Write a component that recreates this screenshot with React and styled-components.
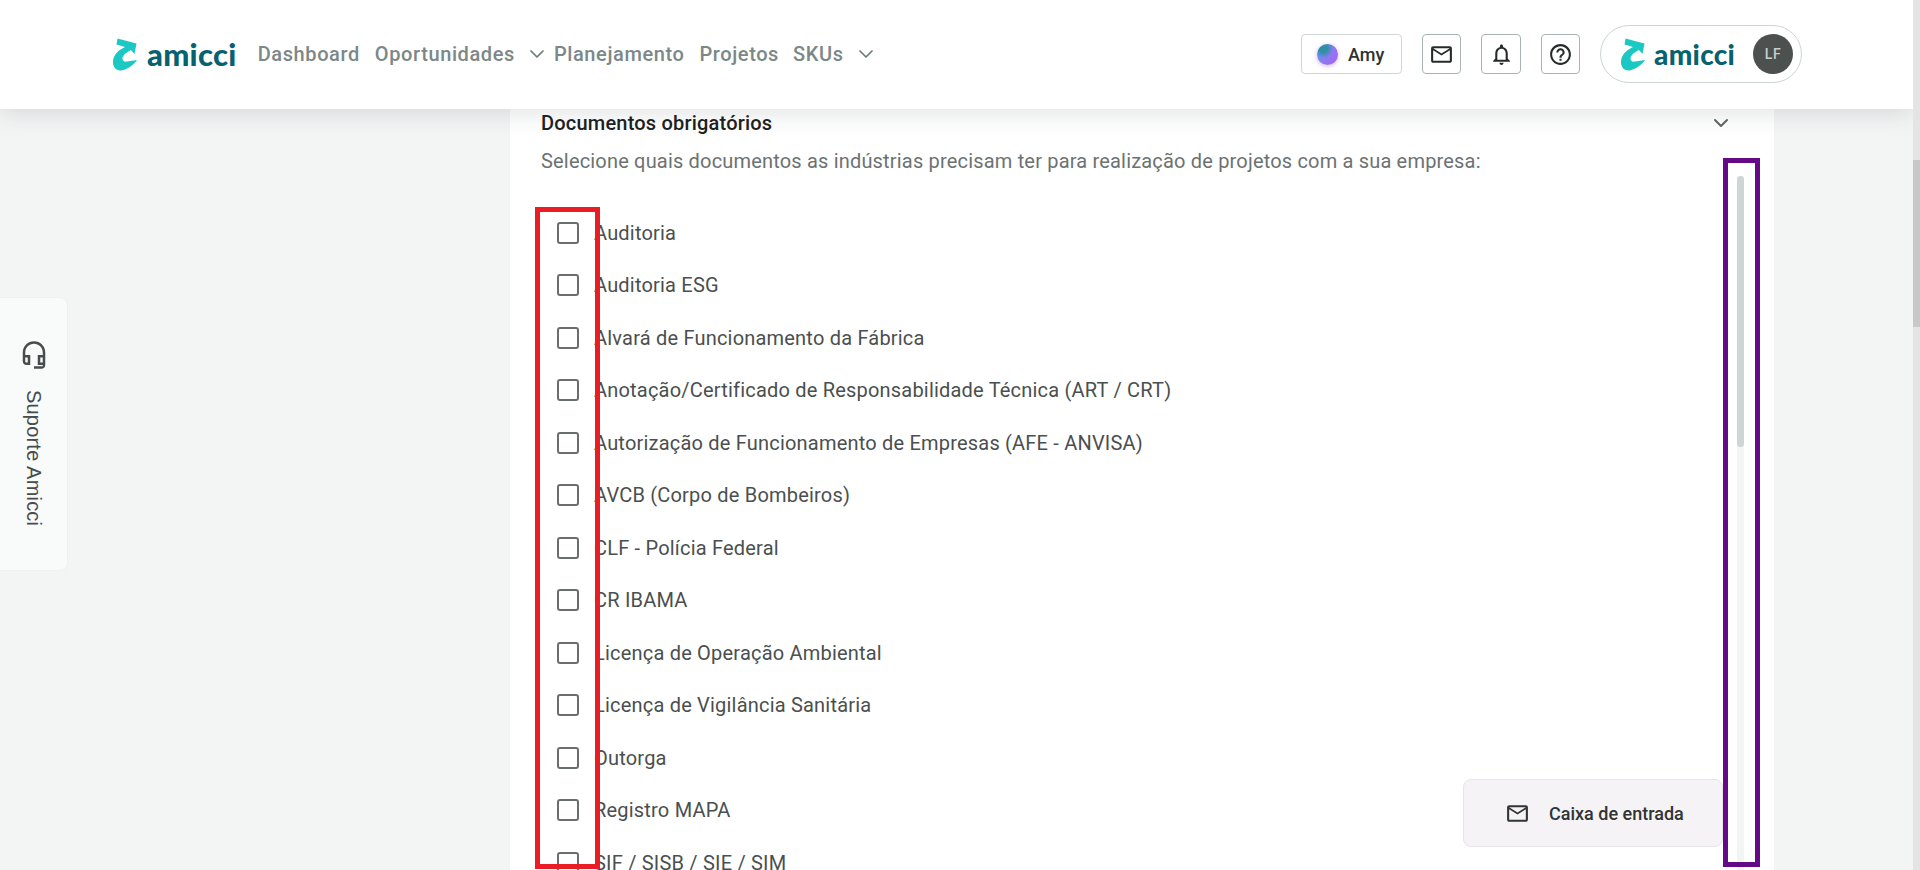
import React from "react";
import styled, { createGlobalStyle } from "styled-components";
import { ChevronDown } from "lucide-react";
import {
  MdMailOutline,
  MdNotificationsNone,
  MdHelpOutline,
  MdOutlineHeadsetMic,
} from "react-icons/md";

const documents = [
  "Auditoria",
  "Auditoria ESG",
  "Alvará de Funcionamento da Fábrica",
  "Anotação/Certificado de Responsabilidade Técnica (ART / CRT)",
  "Autorização de Funcionamento de Empresas (AFE - ANVISA)",
  "AVCB (Corpo de Bombeiros)",
  "CLF - Polícia Federal",
  "CR IBAMA",
  "Licença de Operação Ambiental",
  "Licença de Vigilância Sanitária",
  "Outorga",
  "Registro MAPA",
  "SIF / SISB / SIE / SIM",
];

const GlobalStyle = createGlobalStyle`
  html, body {
    margin: 0;
    height: 100%;
    overflow: hidden;
  }
  body {
    font-family: Roboto, "Liberation Sans", sans-serif;
    background: #f3f5f5;
  }
  * {
    box-sizing: border-box;
  }
`;

const Root = styled.div`
  display: grid;
  grid-template-columns: 1fr 7px;
  height: 870px;
  overflow: hidden;
`;

const PageScrollbar = styled.div`
  background: #e4e4e4;
  padding-top: 160px;
`;

const PageThumb = styled.div`
  height: 167px;
  background: #c8c8c8;
`;

const Page = styled.div`
  position: relative;
  height: 870px;
  overflow: hidden;
`;

const Header = styled.header`
  position: relative;
  z-index: 3;
  display: flex;
  align-items: center;
  justify-content: space-between;
  height: 109px;
  padding: 0 111px 1px 113px;
  background: #fff;
  box-shadow: 0 3px 24px rgba(40, 50, 50, 0.15);
`;

const HeaderLeft = styled.div`
  display: flex;
  align-items: center;
`;

const HeaderRight = styled.div`
  display: flex;
  align-items: center;
  gap: 20px;
`;

const Nav = styled.nav`
  display: flex;
  align-items: center;
  margin-left: 21px;
`;

const NavItem = styled.a`
  display: flex;
  align-items: center;
  margin-right: ${(p) => p.$gap}px;
  font-size: 20px;
  font-weight: 500;
  line-height: 24px;
  letter-spacing: 0.6px;
  color: #7c8787;
`;

const NavChevron = styled(ChevronDown)`
  width: 24px;
  height: 24px;
  margin-left: 10px;
  color: #6f7a7a;
`;

const LogoWrap = styled.div`
  display: flex;
  align-items: center;
`;

const LogoWord = styled.span`
  margin-left: ${(p) => p.$gap}px;
  font-family: Lato, "Noto Sans", sans-serif;
  font-size: ${(p) => p.$size}px;
  font-weight: 900;
  line-height: 32px;
  letter-spacing: 0.3px;
  color: #07616f;
`;

const AmyButton = styled.button`
  display: flex;
  align-items: center;
  gap: 10px;
  width: 101px;
  height: 40px;
  padding: 0 0 0 15px;
  border: 1px solid #cfd6d6;
  border-radius: 4px;
  background: #fff;
  font-family: inherit;
  font-size: 18px;
  font-weight: 500;
  color: #2d3232;
`;

const Orb = styled.span`
  display: block;
  flex: none;
  width: 21px;
  height: 21px;
  border-radius: 50%;
  background: radial-gradient(circle at 30% 20%, #2f8fa8 0 18%, transparent 45%),
    linear-gradient(120deg, #5f9ff2 0%, #8a7cf2 50%, #ad5ff3 100%);
  box-shadow: 0 1px 4px rgba(160, 100, 240, 0.5);
`;

const IconButton = styled.button`
  display: flex;
  align-items: center;
  justify-content: center;
  width: ${(p) => p.$width}px;
  height: 40px;
  padding: 0;
  border: 1px solid #aab3b3;
  border-radius: 4px;
  background: #fff;
  color: #262a2a;

  svg {
    width: 25px;
    height: 25px;
  }
`;

const AccountPill = styled.div`
  display: flex;
  align-items: center;
  justify-content: space-between;
  width: 202px;
  height: 58px;
  padding: 0 8px 0 20px;
  border: 1px solid #ccd4d4;
  border-radius: 29px;
  background: #fff;
`;

const Avatar = styled.span`
  display: flex;
  align-items: center;
  justify-content: center;
  width: 40px;
  height: 40px;
  border-radius: 50%;
  background: #4c5150;
  font-size: 14px;
  font-weight: 500;
  letter-spacing: 0.5px;
  color: #c9cecd;
`;

const Body = styled.main`
  display: flex;
  padding-left: 510px;
  padding-right: 139px;
`;

const Panel = styled.section`
  position: relative;
  flex: 1;
  height: 761px;
  overflow: hidden;
  padding-left: 31px;
  background: #fff;
`;

const TitleRow = styled.div`
  display: flex;
  align-items: center;
  justify-content: space-between;
  height: 28px;
  padding-right: 41px;
`;

const Title = styled.h2`
  margin: 0;
  font-size: 20px;
  font-weight: 500;
  line-height: 28px;
  letter-spacing: 0.2px;
  color: #1d2222;
`;

const TitleChevron = styled(ChevronDown)`
  width: 24px;
  height: 24px;
  color: #5f6666;
`;

const Description = styled.p`
  margin: 10px 0 0;
  font-size: 20px;
  line-height: 28px;
  letter-spacing: 0.18px;
  color: #6c7272;
`;

const DocumentList = styled.ul`
  display: flex;
  flex-direction: column;
  margin: 31.5px 0 0;
  padding: 0 0 0 16px;
  list-style: none;
`;

const DocumentRow = styled.li`
  display: flex;
  align-items: center;
  gap: 15px;
  height: 52.5px;
  font-size: 20px;
  letter-spacing: 0.2px;
  color: #4a4f4f;
`;

const CheckBox = styled.span`
  flex: none;
  width: 22px;
  height: 22px;
  border: 2.5px solid #6a6e6e;
  border-radius: 3px;
  background: #fff;
`;

const InnerScrollbar = styled.div`
  position: absolute;
  top: 67px;
  right: 30px;
  bottom: 0;
  width: 7px;
  background: #f3f5f5;
`;

const InnerThumb = styled.div`
  height: 271px;
  border-radius: 4px;
  background: #cdd5d5;
`;

const RedMark = styled.div`
  position: absolute;
  z-index: 1;
  top: 98px;
  left: 25px;
  width: 65px;
  height: 662px;
  border: 5px solid #ea1c24;
`;

const PurpleMark = styled.div`
  position: absolute;
  z-index: 1;
  top: 49px;
  right: 14px;
  width: 37.5px;
  height: 709px;
  border: 5px solid #650a86;
`;

const InboxButton = styled.button`
  position: absolute;
  z-index: 2;
  top: 670px;
  right: 51px;
  display: flex;
  align-items: center;
  gap: 19px;
  width: 260px;
  height: 68px;
  padding: 0 0 0 41px;
  border: 1px solid #e8e4ea;
  border-radius: 8px;
  background: #f6f3f6;
  font-family: inherit;
  font-size: 18px;
  font-weight: 500;
  color: #303434;

  svg {
    width: 25px;
    height: 25px;
  }
`;

const SupportTab = styled.aside`
  position: absolute;
  z-index: 2;
  top: 297px;
  left: 0;
  display: flex;
  flex-direction: column;
  align-items: center;
  gap: 20px;
  width: 68px;
  height: 274px;
  padding-top: 42px;
  border: 1px solid #eef0f0;
  border-left: none;
  border-radius: 0 8px 8px 0;
  background: #f9fafa;
  color: #474c4c;

  svg {
    width: 30px;
    height: 30px;
  }
`;

const SupportLabel = styled.span`
  writing-mode: vertical-rl;
  font-family: "Liberation Sans", Arial, sans-serif;
  font-size: 20px;
  line-height: 24px;
  letter-spacing: 0.2px;
`;

function Logo({ wordSize, wordGap }) {
  return (
    <LogoWrap>
      <svg width="24" height="33" viewBox="0 0 24 32" aria-hidden="true">
        <path
          fill="#1cc8c4"
          d="M4.5 0 L23.5 5 L21.5 15.5 L18 11.5 C13 14 9.5 17 9.5 20 C9.5 22.5 11.5 23.5 14 23 L24 21.5 C21 26 15 31 8 32 C3 32.5 0 28.5 0 23.5 C0 16 6 11.5 12 8.5 L3.5 6 Z"
        />
      </svg>
      <LogoWord $size={wordSize} $gap={wordGap}>amicci</LogoWord>
    </LogoWrap>
  );
}

export default function App() {
  return (
    <>
      <GlobalStyle />
      <Root>
        <Page>
          <Header>
            <HeaderLeft>
              <Logo wordSize={31} wordGap={10} />
              <Nav>
                <NavItem $gap={15}>Dashboard</NavItem>
                <NavItem $gap={5}>
                  Oportunidades
                  <NavChevron strokeWidth={1.75} />
                </NavItem>
                <NavItem $gap={15}>Planejamento</NavItem>
                <NavItem $gap={14}>Projetos</NavItem>
                <NavItem $gap={0}>
                  SKUs
                  <NavChevron strokeWidth={1.75} />
                </NavItem>
              </Nav>
            </HeaderLeft>
            <HeaderRight>
              <AmyButton>
                <Orb />
                Amy
              </AmyButton>
              <IconButton $width={39} aria-label="Mensagens">
                <MdMailOutline />
              </IconButton>
              <IconButton $width={40} aria-label="Notificações">
                <MdNotificationsNone />
              </IconButton>
              <IconButton $width={39} aria-label="Ajuda">
                <MdHelpOutline />
              </IconButton>
              <AccountPill>
                <Logo wordSize={28} wordGap={9} />
                <Avatar>LF</Avatar>
              </AccountPill>
            </HeaderRight>
          </Header>
          <Body>
            <Panel>
              <TitleRow>
                <Title>Documentos obrigatórios</Title>
                <TitleChevron />
              </TitleRow>
              <Description>
                Selecione quais documentos as indústrias precisam ter para realização de projetos com a sua empresa:
              </Description>
              <DocumentList>
                {documents.map((doc) => (
                  <DocumentRow key={doc}>
                    <CheckBox />
                    {doc}
                  </DocumentRow>
                ))}
              </DocumentList>
              <RedMark />
              <InnerScrollbar>
                <InnerThumb />
              </InnerScrollbar>
              <PurpleMark />
              <InboxButton>
                <MdMailOutline />
                Caixa de entrada
              </InboxButton>
            </Panel>
          </Body>
          <SupportTab>
            <MdOutlineHeadsetMic />
            <SupportLabel>Suporte Amicci</SupportLabel>
          </SupportTab>
        </Page>
        <PageScrollbar>
          <PageThumb />
        </PageScrollbar>
      </Root>
    </>
  );
}
